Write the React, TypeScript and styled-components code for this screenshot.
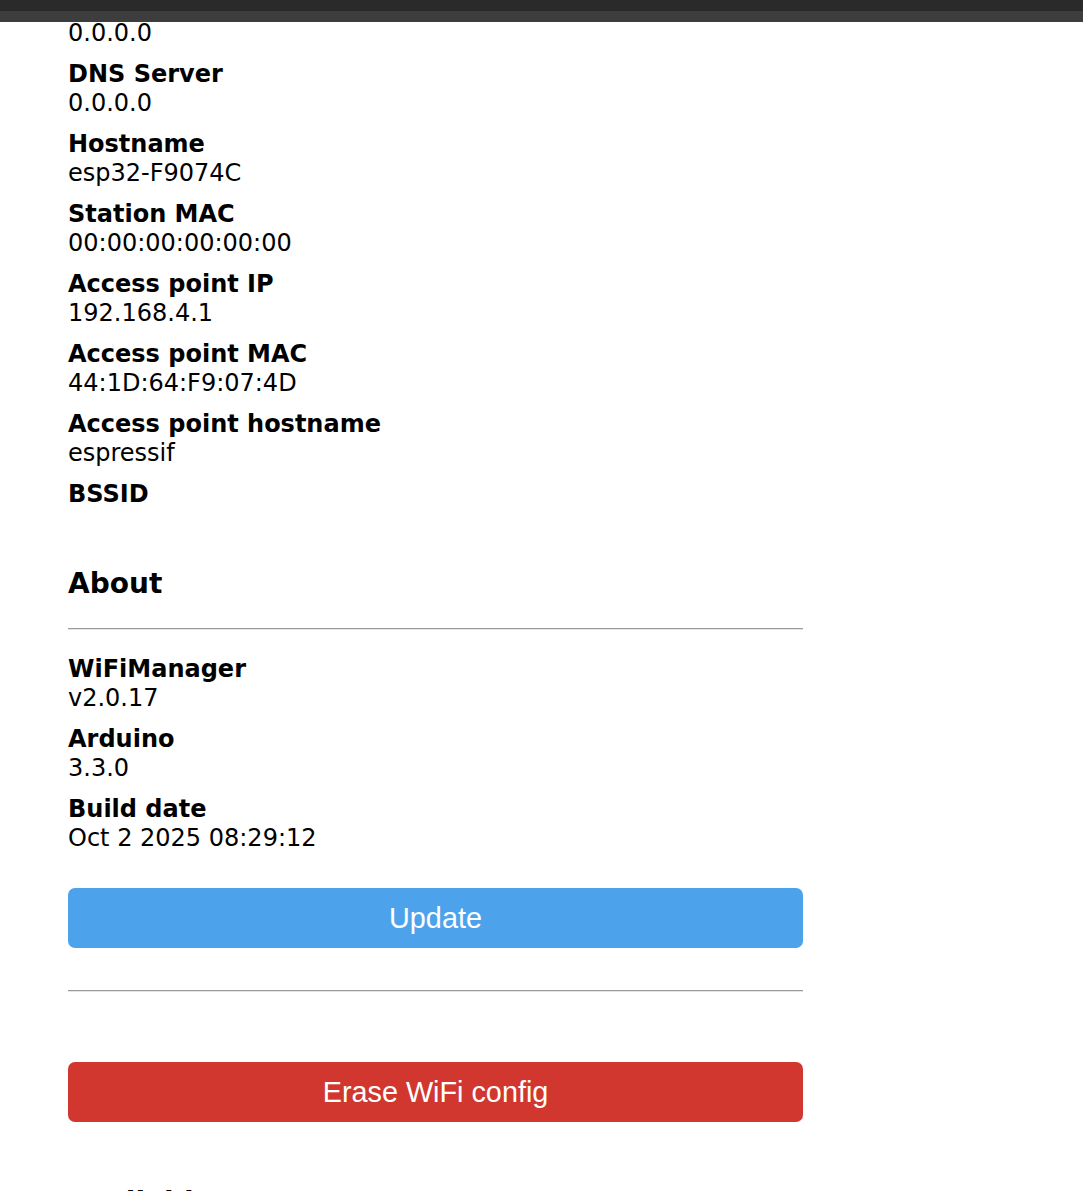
import React from "react";
import styled, { createGlobalStyle } from "styled-components";

const GlobalStyle = createGlobalStyle`
  html, body {
    margin: 0;
    padding: 0;
    background: #ffffff;
  }
  body {
    font-family: "DejaVu Sans", Verdana, sans-serif;
    color: #000;
  }
`;

const TopBar = styled.div`
  position: fixed;
  top: 0;
  left: 0;
  right: 0;
  height: 22px;
  background: linear-gradient(to bottom, #2a2a2a 0, #2a2a2a 11px, #3d3d3d 11px, #3d3d3d 22px);
  z-index: 10;
`;

const Page = styled.div`
  padding: 19px 0 0 68px;
`;

const Wrap = styled.div`
  width: 735px;
  text-align: left;
`;

const InfoList = styled.dl<{ $top?: number }>`
  margin: ${(p) => p.$top ?? 0}px 0 0 0;
  font-size: 24px;
  line-height: 29px;
`;

const Term = styled.dt`
  font-weight: bold;
`;

const Desc = styled.dd`
  margin: 0;
  padding: 0 0 12px 0;
  min-height: 18px;
`;

const Heading = styled.h3<{ $top: number; $bottom: number }>`
  margin: ${(p) => p.$top}px 0 ${(p) => p.$bottom}px 0;
  font-size: 28px;
  line-height: 33px;
  font-weight: bold;
`;

const Rule = styled.hr<{ $top: number }>`
  margin: ${(p) => p.$top}px 0 0 0;
  height: 0;
  border: 0;
  border-top: 1px solid #9a9a9a;
  border-bottom: 1px solid #e4e4e4;
`;

const ActionButton = styled.button<{ $tone: "blue" | "red"; $top: number }>`
  display: block;
  width: 100%;
  height: 60px;
  margin: ${(p) => p.$top}px 0 0 0;
  padding: 0;
  border: 0;
  border-radius: 7px;
  background: ${(p) => (p.$tone === "blue" ? "#4ca3ec" : "#d1372e")};
  color: #ffffff;
  font-family: "Liberation Sans", Arial, sans-serif;
  font-size: 28.8px;
  line-height: 60px;
  text-align: center;
  cursor: pointer;
`;

type Item = { term?: string; value: string };

const network: Item[] = [
  { value: "0.0.0.0" },
  { term: "DNS Server", value: "0.0.0.0" },
  { term: "Hostname", value: "esp32-F9074C" },
  { term: "Station MAC", value: "00:00:00:00:00:00" },
  { term: "Access point IP", value: "192.168.4.1" },
  { term: "Access point MAC", value: "44:1D:64:F9:07:4D" },
  { term: "Access point hostname", value: "espressif" },
  { term: "BSSID", value: "" },
];

const about: Item[] = [
  { term: "WiFiManager", value: "v2.0.17" },
  { term: "Arduino", value: "3.3.0" },
  { term: "Build date", value: "Oct 2 2025 08:29:12" },
];

const renderItems = (items: Item[]) =>
  items.map((it, i) => (
    <React.Fragment key={i}>
      {it.term && <Term>{it.term}</Term>}
      <Desc>{it.value}</Desc>
    </React.Fragment>
  ));

export default function App() {
  return (
    <>
      <GlobalStyle />
      <TopBar />
      <Page>
        <Wrap>
          <InfoList>{renderItems(network)}</InfoList>
          <Heading $top={28} $bottom={28}>About</Heading>
          <Rule $top={0} />
          <InfoList $top={25}>{renderItems(about)}</InfoList>
          <ActionButton $tone="blue" $top={23}>Update</ActionButton>
          <Rule $top={42} />
          <ActionButton $tone="red" $top={70}>Erase WiFi config</ActionButton>
          <Heading $top={64} $bottom={28}>Available Pages</Heading>
        </Wrap>
      </Page>
    </>
  );
}
